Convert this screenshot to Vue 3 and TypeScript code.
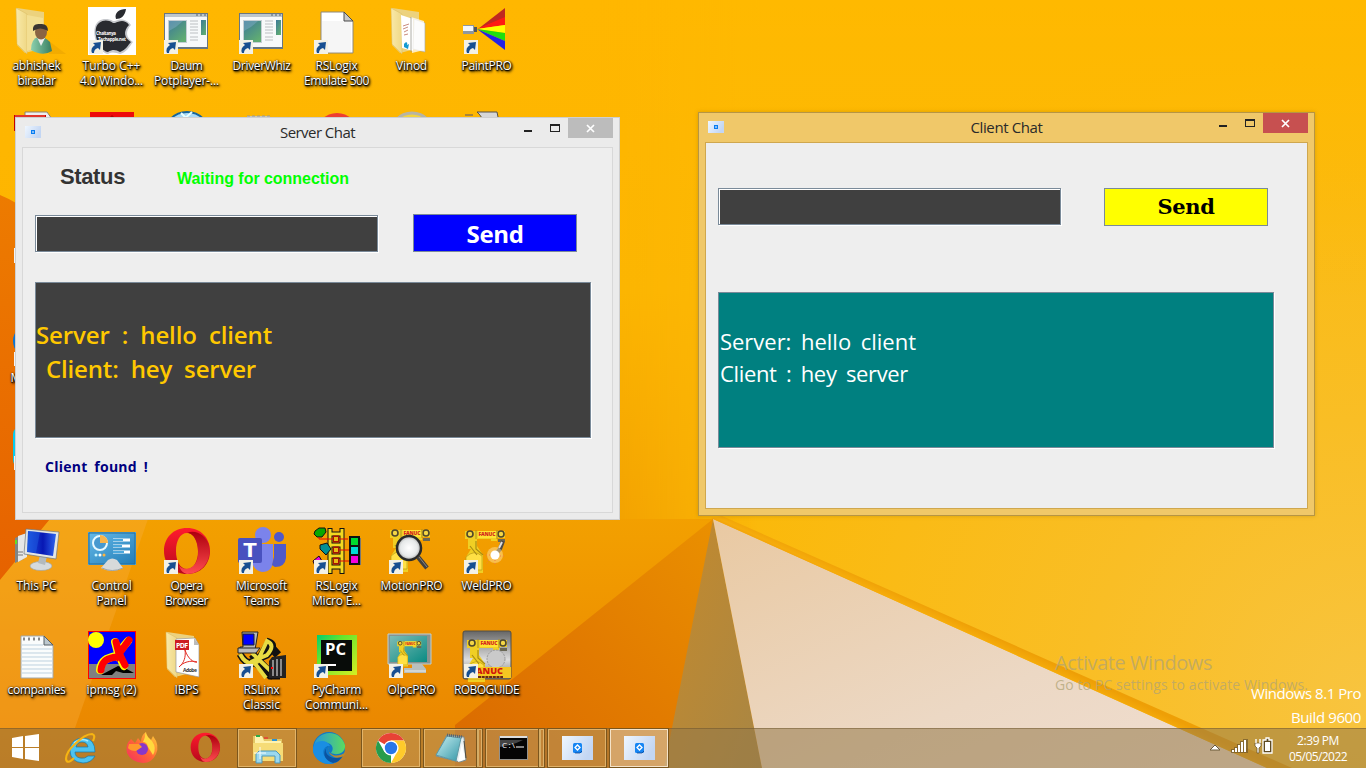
<script setup lang="ts">
import type { Directive } from 'vue'

interface DesktopItem {
  icon: string
  lines: { text: string; width: number }[]
  shortcut?: boolean
}

interface TaskItem {
  icon: string
  kind: string
}

/* Spreads the letters of a single line over a known pixel width. */
const vFit: Directive<HTMLElement, number> = {
  mounted(el, binding) {
    const count = (el.textContent ?? '').trim().length
    const natural = el.getBoundingClientRect().width
    if (count > 1) el.style.letterSpacing = `${(binding.value - natural) / count}px`
  },
}

const item = (icon: string, shortcut: boolean, ...parts: (string | number)[]): DesktopItem => {
  const lines: { text: string; width: number }[] = []
  for (let i = 0; i < parts.length; i += 2) lines.push({ text: String(parts[i]), width: Number(parts[i + 1]) })
  return { icon, shortcut, lines }
}

const blank = item('', false)

const rows: DesktopItem[][] = [
  [
    item('userFolder', false, 'abhishek', 48, 'biradar', 38),
    item('apple', true, 'Turbo C++', 58, '4.0 Windo...', 63),
    item('app', true, 'Daum', 32, 'Potplayer-...', 65),
    item('app', true, 'DriverWhiz', 58),
    item('page', true, 'RSLogix', 42, 'Emulate 500', 65),
    item('docFolder', false, 'Vinod', 31),
    item('paint', true, 'PaintPRO', 50),
  ],
  [
    item('peekPdf', false), item('peekRed', false), item('peekGlobe', false), item('peekGrid', false),
    item('peekCircle', false), item('peekDisc', false), item('peekCyl', false),
  ],
  [item('peekShort', false), blank, blank, blank, blank, blank, blank],
  [item('peekBlue', false, 'Microsoft', 52), blank, blank, blank, blank, blank, blank],
  [item('peekCyan', false), blank, blank, blank, blank, blank, blank],
  [
    item('pc', false, 'This PC', 40),
    item('control', false, 'Control', 40, 'Panel', 30),
    item('opera', true, 'Opera', 32, 'Browser', 43),
    item('teams', true, 'Microsoft', 51, 'Teams', 35),
    item('ladder', true, 'RSLogix', 42, 'Micro E...', 49),
    item('motion', true, 'MotionPRO', 62),
    item('weld', true, 'WeldPRO', 50),
  ],
  [
    item('notes', false, 'companies', 58),
    item('ipmsg', false, 'ipmsg (2)', 50),
    item('pdfFolder', false, 'IBPS', 24),
    item('linx', true, 'RSLinx', 36, 'Classic', 37),
    item('pycharm', true, 'PyCharm', 49, 'Communi...', 63),
    item('olpc', true, 'OlpcPRO', 48),
    item('robo', true, 'ROBOGUIDE', 65),
  ],
]

const folderBack = '<path d="M4 1 31 5V41L12 46 4 38Z" fill="#ecd27e"/><path d="M3 1 14 7V47L4 37Z" fill="url(#gFolder)" stroke="#d9bb62" stroke-width=".5"/>'
const robot = '<path d="M2 4H42V11H34V14H28V12H14V19L20 28V46H3V30L8 22H5V12H2Z" fill="#f0cf24"/><path d="M3 30Q11 22 19 29V43H3Z" fill="#ffe044" stroke="#b99b16" stroke-width=".7"/><path d="M7 19 14 28M13 14V22L20 28" stroke="#a88d15" stroke-width="1.2" fill="none"/><rect x="15" y="4" width="18" height="7" fill="#ffe232"/><circle cx="7" cy="7" r="3" fill="#f3d646" stroke="#4f482c" stroke-width="1.6"/><circle cx="38" cy="7" r="3" fill="#f3d646" stroke="#4f482c" stroke-width="1.6"/><path d="M13 3V12M34 3V12" stroke="#ad9220"/><text x="15.5" y="9.2" font-size="5" font-weight="900" textLength="17" fill="#d3261c">FANUC</text><path d="M35 12H42V15H35Z" fill="#696754"/>'
const operaRing = '<path fill-rule="evenodd" d="M24 1C10 1 1 11 1 24S10 47 24 47 47 37 47 24 38 1 24 1M24 6C31 6 35 14 35 24S31 42 24 42 13 34 13 24 17 6 24 6" fill="url(#gOpera)"/><path d="M24 6C33 2 43 9 46 18 49 35 38 47 24 47 20 46 18 44 16 39 25 46 34 39 35 29 36 16 31 6 24 6" fill="url(#gOpera2)"/>'

const glyphs: Record<string, string> = {
  userFolder: folderBack + '<path d="M14 8 30 11V38L14 44Z" fill="#f3df93"/><path d="M36 34 53 47H36Z" fill="#bd7900" opacity=".18"/><path d="M18 43Q18 32 25 30 31 29 37 35L39 44Q30 50 18 43Z" fill="url(#gBody)"/><path d="M24 30 28 39 32 31Z" fill="#eee"/><ellipse cx="28" cy="25" rx="6" ry="7.5" fill="#8a6443"/><path d="M20 24Q19 16 27 17 35 16 35 24L33 23Q27 20 22 23Z" fill="#3a3531"/>',
  apple: '<path d="M0 0H48V48H0Z" fill="#fff"/><path d="M25 14C18 10 9 12 7 20 4 31 12 46 20 47 25 44 28 46 32 47 38 46 42 39 45 35 38 31 37 24 43 18 38 11 31 12 27 14Z" fill="#c7c9cd"/><path d="M25 16C18 11 10 14 8 21 6 32 13 44 20 45 25 42 28 43 32 45 38 43 40 38 43 35 36 31 35 24 41 18 37 12 31 14 27 16ZM28 12C26 6 31 2 38 2 37 9 33 12 28 12" fill="#292b30"/><text x="8" y="28" font-size="4.4" font-weight="700" fill="#fff" textLength="20">Chaitanya</text><text x="10" y="34" font-size="4.4" font-weight="700" fill="#fff" textLength="28">Techapple.net</text>',
  app: '<path d="M1 6H45V42H1Z" fill="#687682"/><path d="M2 7H44V40H2Z" fill="#f7f9fa"/><path d="M2 7H44V10H2Z" fill="#bdc6cd"/><path d="M33 8H35M37 8H39M41 8H43" stroke="#55626d"/><rect x="5" y="13" width="19" height="23" fill="#c4ced3"/><path d="M6 14H23V35H6Z" fill="url(#gScreen)"/><path d="M6 14H20Q14 20 6 24Z" fill="#86b0ca" opacity=".45"/><path d="M38 13H43V28H38Z" fill="url(#gScreen)"/><path d="M27 14H35M27 17H35M27 20H35M27 23H35M27 26H35M27 30H35M27 33H35" stroke="#bcbfc2"/>',
  page: '<path d="M8 5H31L40 14V46H8Z" fill="#fff" stroke="#8e887b"/><path d="M9 14H38V45H9Z" fill="#f6f6f6"/><path d="M31 5V14H40Z" fill="#c8c8c8" stroke="#4c4c4c"/>',
  docFolder: folderBack + '<path d="M13 8 25 12V44L14 41Z" fill="#fff"/><path d="M15 19 21 17M15 22 20 20M16 25 20 23M16 28 20 27" stroke="#c98c80"/><path d="M26 12 37 16V45L25 42Z" fill="#f5f5f5" stroke="#a9abab" stroke-width=".6"/><path d="M23 10 36 14V43L24 46Z" fill="#fdfdfd" opacity=".75"/><path d="M23 10V45" stroke="#9b9b93" stroke-width=".8"/><path d="M16 37C18 34 20 35 19 38L21 37 20 42 16 40Z" fill="#169bd2"/>',
  paint: '<path d="M42 1V11L15 22Z" fill="#bf2820"/><path d="M42 10V18L14 22Z" fill="#ff1a13"/><path d="M42 18V26L14 22Z" fill="#ff0"/><path d="M42 26V34L14 22Z" fill="#20df0d"/><path d="M42 34V43L14 22Z" fill="#2422e6"/><rect x="0" y="18" width="11" height="9" fill="#8e979e"/><path d="M0 21.5H10" stroke="#f4f7f9" stroke-width="5"/><path d="M11 20H14V25H11Z" fill="#555"/>',
  peekPdf: '<path d="M12 1H34L39 8H12Z" fill="#eee" stroke="#8c8170"/><path d="M1 4H33V20H1Z" fill="#c40000"/><path d="M2 5H32" stroke="#ff6b57"/>',
  peekRed: '<path d="M2 1H46V20H2Z" fill="#ed0b0c"/><path d="M21 7 24 4 27 7Z" fill="#b80000"/>',
  peekGlobe: '<circle cx="24" cy="24" r="23" fill="#a8d9f5" stroke="#17659b" stroke-width="2"/><path d="M11 7H38M18 2 26 10M29 1 19 10" stroke="#e8ffff" stroke-width="2"/>',
  peekGrid: '<path d="M9 5H32V10H9Z" fill="#c8c8bb"/><path d="M9 5H32M9 8H32" stroke="#999" stroke-dasharray="3 2"/>',
  peekCircle: '<circle cx="24" cy="23" r="21" fill="#ed3d31"/>',
  peekDisc: '<circle cx="24" cy="24" r="22" fill="#f1d440" stroke="#b7b4a4" stroke-width="3"/>',
  peekCyl: '<path d="M14 1H34L37 16H24Q18 4 14 1Z" fill="#d7d7d7" stroke="#55514a"/><path d="M2 4H10" stroke="#a8853b" stroke-width="2"/>',
  peekShort: '<path d="M1 33H16V48H1Z" fill="#f4f4f4"/>',
  peekBlue: '<circle cx="17" cy="22" r="17" fill="#0876d8"/><path d="M1 33H16V47H1Z" fill="#f4f4f4"/>',
  peekCyan: '<rect x="0" y="4" width="35" height="40" rx="7" fill="#08ccef"/><path d="M1 33H16V47H1Z" fill="#f4f4f4"/>',
  pc: '<path d="M2 11 11 7V32L2 36Z" fill="#7f8585"/><path d="M5 9 14 6V30L5 35Z" fill="#e7e8e6"/><path d="M2 13H4V17H2Z" fill="#60e126"/><path d="M5 25H10M5 28H10" stroke="#777"/><ellipse cx="28" cy="39" rx="11" ry="4.5" fill="#d5dadc" stroke="#99a1a5" stroke-width=".6"/><path d="M27 28 34 29 32 38 25 36Z" fill="#b3babd"/><path d="M13 2 46 5 43 32 11 27Z" fill="#e5e7e3" stroke="#6d777e" stroke-width=".7"/><path d="M15 4 43 7 40 29 14 25Z" fill="url(#gMonitor)"/><path d="M16 4 27 5 23 26 14 24Z" fill="#2264e5" opacity=".45"/>',
  control: '<path d="M0 5H48V38H0Z" fill="#4aa6dc"/><path d="M1 6H47V37H1Z" fill="url(#gPanel)" stroke="#266f9c"/><circle cx="12" cy="16" r="7" fill="#4799d0" stroke="#e8f9ff" stroke-width="2"/><path d="M12 16V8A8 8 0 0 1 20 16Z" fill="#f8b44a"/><path d="M25 13H42M25 19H42M25 25H42" stroke="#fff" stroke-width="3"/><path d="M25 13H35M25 19H34M25 25H36" stroke="#4ba7dc" stroke-width="2"/><circle cx="8" cy="28" r="1.5" fill="#c8f6ff"/><circle cx="12" cy="28" r="1.5" fill="#fff"/><circle cx="16" cy="28" r="1.5" fill="#ffb43d"/><path d="M20 33Q24 30 29 33L35 41Q24 47 13 41Z" fill="#d8dada"/><path d="M14 41Q24 46 35 41" stroke="#9aa4aa" fill="none"/>',
  opera: operaRing,
  teams: '<circle cx="25" cy="8" r="8" fill="#7b83eb"/><circle cx="41" cy="10" r="5" fill="#5059c9"/><path d="M14 17H35V33Q35 45 24 45 14 43 14 32Z" fill="#7b83eb"/><path d="M36 17H48V31Q47 40 37 40Q35 39 34 38L36 30Z" fill="#5059c9"/><rect x="0" y="11" width="24" height="25" rx="2" fill="#4951bf"/><text x="5" y="30" font-size="19" font-weight="700" fill="#fff" textLength="14" lengthAdjust="spacingAndGlyphs">T</text>',
  ladder: '<path d="M17 1V47M29 1V47M17 7H29M17 18H29M17 29H29M17 40H29" stroke="#111" stroke-width="5"/><path d="M17 2V46M29 2V46M17 7H29M17 18H29M17 29H29M17 40H29" stroke="#f2d820" stroke-width="3"/><path d="M2 4 6 1H12L13 5 9 10H4L1 7Z" fill="#08a800" stroke="#111"/><path d="M7 18 14 16 18 22 13 28 7 22Z" fill="#008f94" stroke="#111"/><path d="M0 34 6 29 9 34 2 39Z" fill="#e900dd" stroke="#111"/><path d="M6 10V12H35M20 23H37M20 34H37" fill="none" stroke="#e40908"/><path d="M40 11H48V38H40" fill="#777"/><rect x="37" y="10" width="9" height="9" fill="#00da2f" stroke="#111" stroke-width="2"/><rect x="37" y="19" width="9" height="9" fill="#00dcd6" stroke="#111" stroke-width="2"/><rect x="37" y="28" width="9" height="9" fill="#f500dd" stroke="#111" stroke-width="2"/><path d="M20 12H26M20 23H26M20 34H26" stroke="#a41305" stroke-width="7"/><path d="M21 12H25M21 23H25M21 34H25" stroke="#e9b913" stroke-width="4"/>',
  motion: `<g transform="translate(0 -1)">${robot}</g><circle cx="21" cy="21" r="12" fill="url(#gLens)" stroke="#292a29" stroke-width="2.5"/><path d="M30 30 39 41" stroke="#44413d" stroke-width="4.5"/><path d="M31 30 39 40" stroke="#888" stroke-width="1"/>`,
  weld: robot + '<path d="M40 14 37 22 33 27" stroke="#4d4945" stroke-width="4" fill="none"/><path d="M39 15 36 21" stroke="#ddd" stroke-width="2"/><circle cx="32" cy="28" r="8" fill="#ffe19c" opacity=".5"/><circle cx="32" cy="28" r="4.5" fill="#fff"/><path d="M23 28H28M32 33V38M37 29H42M26 33 23 38" stroke="#ee7d4b" stroke-dasharray="1 2"/>',
  notes: '<path d="M8 5H31L40 14V47H8Z" fill="#fafcfc" stroke="#a3a8aa"/><path d="M10 8H29" stroke="#888" stroke-width="3" stroke-dasharray="2 3"/><path d="M9 14H30M9 18H39M9 22H39M9 26H39M9 30H39M9 34H39M9 38H39M9 42H39" stroke="#bdd1df"/><path d="M31 5V14H40Z" fill="#bdc8ce" stroke="#566067"/>',
  ipmsg: '<path d="M0 0H48V48H0Z" fill="#f00"/><path d="M1 1H47V34H1Z" fill="#00f"/><path d="M1 33H47V47H1Z" fill="#808080"/><circle cx="8" cy="9" r="8" fill="#ff0"/><path d="M13 44H24L28 40 35 42H46L37 37 30 35Z" fill="#000"/><path d="M12 39C13 29 19 27 28 25M27 11 30 22 40 10M30 22 36 35" stroke="#ff0" stroke-width="8" stroke-linecap="round" fill="none"/><path d="M13 39C14 29 20 27 29 26M28 11 31 23 41 9M31 22 37 34" stroke="#f00" stroke-width="7" stroke-linecap="round" fill="none"/>',
  pdfFolder: folderBack + '<path d="M13 8 32 7 36 14V46L13 41Z" fill="#fff" stroke="#999" stroke-width=".7"/><path d="M31 7V14H36Z" fill="#bbb"/><path d="M12 9H26V19H12Z" fill="#cd1b20"/><text x="13" y="16.5" font-size="7" font-weight="700" fill="#fff" textLength="12">PDF</text><path d="M22 19C25 28 31 32 34 31 28 29 20 31 16 36 21 32 23 26 22 19" stroke="#e22c24" fill="none"/><text x="20" y="41" font-size="5" font-weight="700" fill="#333" textLength="14">Adobe</text>',
  linx: '<path d="M2 23Q9 36 19 31L31 11Q39 14 29 24L15 30 32 45H42" stroke="#111" stroke-width="7" fill="none"/><path d="M14 23 36 46M27 20 33 16 40 24" stroke="#111" stroke-width="8" fill="none"/><path d="M2 23Q9 36 19 31L29 10Q38 14 29 24L15 30 28 47M14 22 38 45" stroke="#e7dc43" stroke-width="4" fill="none"/><path d="M4 1H20L17 19H2V16H5Z" fill="#b7b7b7" stroke="#222"/><path d="M5 3H16V14H5Z" fill="#00f" stroke="#222"/><path d="M0 17H22L18 22H0Z" fill="#bababa" stroke="#222"/><path d="M34 26 48 24V47H31V30Z" fill="#222"/><path d="M35 29V45M39 28V45M43 28V45" stroke="#8a8a8a" stroke-width="2"/><path d="M33 37H35" stroke="red" stroke-width="2"/>',
  pycharm: '<path d="M4 4H44V44H4Z" fill="url(#gPy)"/><path d="M8 9H39V40H8Z" fill="#080c09"/><text x="12" y="24" font-size="16" font-weight="700" fill="#fff" textLength="21" lengthAdjust="spacingAndGlyphs">PC</text><path d="M12 34H23" stroke="#fff" stroke-width="2"/>',
  olpc: `<path d="M0 3H43V33H0Z" fill="#88938f" stroke="#c0d0cf"/><path d="M2 5H39V31H2Z" fill="url(#gTeal)"/><g transform="translate(8 8) scale(.6)">${robot}</g><path d="M24 33H34L38 38V42H16V37H24Z" fill="#b9c0bd"/><path d="M17 40H38" stroke="#ebece9"/>`,
  robo: `<rect x="0" y="0" width="48" height="48" rx="2" fill="url(#gMetal)" stroke="#524e45"/><g transform="translate(2 5)">${robot}</g><circle cx="33" cy="28" r="9" fill="#cacaca" stroke="#999" stroke-dasharray="2 1"/><path d="M1 36H48V47H1Z" fill="#f5c622"/><text x="13" y="43" font-size="8" font-weight="800" fill="#d3190b" textLength="27" lengthAdjust="spacingAndGlyphs">ANUC</text><path d="M15 46H40" stroke="#6a2714" stroke-width="2" stroke-dasharray="3 .7"/>`,
  start: '<path d="M11 10 22 8V19H11ZM24 8 38 6V19H24ZM11 20H22V31L11 29ZM24 20H38V33L24 31Z" fill="#fff"/>',
  ie: '<path d="M38 24H18Q18 29 23 30 28 31 31 28H38Q34 35 26 35 13 34 13 22 14 10 27 10 38 11 38 24M19 19H31Q30 14 25 14 20 14 19 19" fill="#4cc3f1" stroke="#1678aa" stroke-width=".7"/><path d="M17 15Q24 9 31 13" stroke="#a9ebff" stroke-width="1.5" fill="none"/><path d="M17 30Q10 37 9 31 9 24 18 16 28 6 35 6 39 7 36 13" fill="none" stroke="#f6b412" stroke-width="2.2"/>',
  firefox: '<path d="M12 11 16 15 19 10 22 14Q22 7 27 4 28 9 32 12L34 8Q41 17 37 26 33 35 24 35 12 34 8 25 6 16 12 11" fill="url(#gFox)"/><circle cx="23" cy="21" r="6" fill="#8737c9"/><path d="M10 16H20L23 19 17 23Q11 23 9 20Z" fill="#ff982b"/><path d="M24 14Q27 8 26 4 28 9 33 13 38 20 34 27L29 19Q28 14 24 14" fill="#ffd93e"/>',
  operaSmall: `<g transform="translate(9 4) scale(.64)">${operaRing}</g>`,
  explorer: '<path d="M10 8H19L21 11H39V33H10Z" fill="#e3c664"/><path d="M12 8H19L21 13H38V32H12Z" fill="#fff2ad"/><path d="M10 15H40V33H10Z" fill="#f6dc77"/><path d="M13 8H17" stroke="#2eaa48" stroke-width="2"/><path d="M21 10H25" stroke="#df5134" stroke-width="2"/><path d="M29 12H34" stroke="#2d94d3" stroke-width="2"/><path d="M13 35V26L16 23H33L37 27V35H32V28H19V35Z" fill="#9bd8ef" stroke="#4d98b9"/><path d="M17 19V31M11 25H23" stroke="#fff" opacity=".9"/>',
  edge: '<circle cx="24" cy="20" r="16" fill="#0f78c9"/><path d="M9 18C11 3 34-1 40 17 41 25 32 28 26 25 32 17 21 10 9 18" fill="url(#gEdge)"/><path d="M8 21C8 12 22 10 25 18 19 17 15 25 22 31 28 36 34 31 37 29 31 39 13 39 8 24" fill="#1a8ee3"/><path d="M23 18C18 22 22 30 31 30L38 27Q35 34 28 35 17 31 20 22Z" fill="#0b53a0"/><path d="M24 19Q22 24 28 27 34 29 41 24L39 28Q33 31 29 29 22 26 24 19Z" fill="#b98a2d"/>',
  chrome: '<circle cx="24" cy="20" r="15" fill="#fff"/><path d="M24 20 11 12.5A15 15 0 0 1 37 12.5H24Z" fill="#e84335"/><path d="M24 20 24 12.5H37A15 15 0 0 1 24 35L30 24Z" fill="#ffca2b"/><path d="M24 35A15 15 0 0 1 11 12.5L17.5 24 24 27Z" fill="#279c4b"/><circle cx="24" cy="20" r="7.6" fill="#fff"/><circle cx="24" cy="20" r="6.2" fill="#2876e8"/>',
  notepad: '<path d="M20 7 37 9 39 32 33 34 9 28Z" fill="#e6eef0" stroke="#7c8a8b"/><path d="M20 8 34 10 29 33 9 27Z" fill="url(#gPad)" stroke="#5e98a2"/><path d="M20 7 36 9" stroke="#58636b" stroke-width="3" stroke-dasharray="1 1"/><path d="M35 15 38 31 31 34Z" fill="#fff"/><path d="M37 13 39 30" stroke="#554b3b"/>',
  cmd: '<path d="M10 8H39V32H10Z" fill="#92918d"/><path d="M11 10H38V31H11Z" fill="#050505"/><path d="M11 9H38" stroke="#ddd" stroke-width="2"/><path d="M11 12H34Q25 17 11 19Z" fill="#444"/><text x="13" y="20" font-size="8" fill="#fff" textLength="13">C:\\</text><path d="M27 19H35" stroke="#fff" stroke-width="1"/>',
  java: '<path d="M9 8H40V32H9Z" fill="url(#gJava)"/><rect x="20" y="15" width="9" height="10" rx="1.5" fill="#1685f3"/><path d="m24.5 17 2.5 2.5-2.5 2.5-2.5-2.5Z" fill="none" stroke="#fff" stroke-width="1.3"/><path d="M29 23 27 25H22" stroke="#083b83" fill="none" stroke-width=".7"/>',
}

const tasks: TaskItem[] = [
  { icon: 'start', kind: 'start' },
  { icon: 'ie', kind: 'pinned' },
  { icon: 'firefox', kind: 'pinned' },
  { icon: 'operaSmall', kind: 'pinned' },
  { icon: 'explorer', kind: 'open' },
  { icon: 'edge', kind: 'pinned' },
  { icon: 'chrome', kind: 'open' },
  { icon: 'notepad', kind: 'open stacked' },
  { icon: 'cmd', kind: 'open stacked' },
  { icon: 'java', kind: 'open' },
  { icon: 'java', kind: 'open active' },
]
</script>

<template>
  <main class="desktop">
    <svg class="wallpaper" viewBox="0 0 1366 768" aria-hidden="true">
      <defs>
        <linearGradient id="wBase" x1="0" y1="0" x2="0" y2="1"><stop stop-color="#ffb700" /><stop offset=".38" stop-color="#fdb500" /><stop offset=".7" stop-color="#f29e00" /><stop offset="1" stop-color="#e98300" /></linearGradient>
        <radialGradient id="wGlow" gradientUnits="userSpaceOnUse" cx="1366" cy="700" r="700"><stop stop-color="#f8c43f" /><stop offset=".4" stop-color="#f9be25" /><stop offset="1" stop-color="#fbb806" /></radialGradient>
        <linearGradient id="wFade" gradientUnits="userSpaceOnUse" x1="600" y1="0" x2="760" y2="0"><stop stop-color="#000" /><stop offset="1" stop-color="#fff" /></linearGradient>
        <mask id="wMask"><path d="M560 0H1366V768H560Z" fill="url(#wFade)" /></mask>
        <linearGradient id="wTop" gradientUnits="userSpaceOnUse" x1="0" y1="0" x2="0" y2="300"><stop stop-color="#ffb900" /><stop offset="1" stop-color="#ffb900" stop-opacity="0" /></linearGradient>
        <linearGradient id="wLeft" x1="0" y1="0" x2="0" y2="1"><stop stop-color="#ed7b00" /><stop offset="1" stop-color="#e66200" /></linearGradient>
        <linearGradient id="wShade" x1="0" y1="1" x2="1" y2="0"><stop stop-color="#da6900" /><stop offset=".5" stop-color="#e27b00" /><stop offset="1" stop-color="#ea9000" /></linearGradient>
        <linearGradient id="wSide" x1="0" y1="0" x2="1" y2="1"><stop stop-color="#c58a2c" /><stop offset="1" stop-color="#a88644" /></linearGradient>
        <linearGradient id="wCream" x1="0" y1="0" x2="1" y2="1"><stop stop-color="#e9c9a2" /><stop offset=".6" stop-color="#ecd8c4" /><stop offset="1" stop-color="#f0ded1" /></linearGradient>
        <linearGradient id="wEdge" gradientUnits="userSpaceOnUse" x1="970" y1="625" x2="964" y2="638"><stop stop-color="#ee9f06" /><stop offset=".6" stop-color="#f6ac0b" /><stop offset="1" stop-color="#ee960c" /></linearGradient>
        <linearGradient id="gFolder"><stop stop-color="#f9e9a8" /><stop offset="1" stop-color="#efd886" /></linearGradient>
        <linearGradient id="gBody"><stop stop-color="#8bd0ae" /><stop offset="1" stop-color="#397e60" /></linearGradient>
        <linearGradient id="gScreen" x2=".7" y2="1"><stop stop-color="#3c7998" /><stop offset="1" stop-color="#61ad72" /></linearGradient>
        <linearGradient id="gMonitor"><stop stop-color="#1c53df" /><stop offset=".55" stop-color="#0717b4" /><stop offset="1" stop-color="#2e64ec" /></linearGradient>
        <linearGradient id="gPanel" x2="1" y2="1"><stop stop-color="#65b9e8" /><stop offset="1" stop-color="#237db7" /></linearGradient>
        <linearGradient id="gOpera" x2="0" y2="1"><stop stop-color="#ff1b2d" /><stop offset="1" stop-color="#b7081b" /></linearGradient>
        <linearGradient id="gOpera2" x2="0" y2="1"><stop stop-color="#ad000d" /><stop offset="1" stop-color="#ff4b50" /></linearGradient>
        <radialGradient id="gLens"><stop stop-color="#fff" /><stop offset=".7" stop-color="#e6e9e9" /><stop offset="1" stop-color="#aaa" /></radialGradient>
        <linearGradient id="gPy" x2="1" y2="1"><stop stop-color="#00cf70" /><stop offset=".35" stop-color="#68e52d" /><stop offset="1" stop-color="#d6ee22" /></linearGradient>
        <linearGradient id="gTeal" x2="1" y2="1"><stop stop-color="#7ebbb5" /><stop offset="1" stop-color="#098b83" /></linearGradient>
        <linearGradient id="gMetal" x2="0" y2="1"><stop stop-color="#666" /><stop offset=".6" stop-color="#ddd" /><stop offset="1" stop-color="#777" /></linearGradient>
        <linearGradient id="gFox" x1="0" y1="1" x2="1" y2="0"><stop stop-color="#f42c63" /><stop offset=".5" stop-color="#ff6634" /><stop offset="1" stop-color="#ffdc38" /></linearGradient>
        <linearGradient id="gEdge"><stop stop-color="#2598d9" /><stop offset="1" stop-color="#5bdc5f" /></linearGradient>
        <linearGradient id="gPad" x2="1" y2="1"><stop stop-color="#c8eff2" /><stop offset="1" stop-color="#3598a8" /></linearGradient>
        <linearGradient id="gJava" x2="1" y2=".4"><stop stop-color="#eef6ff" /><stop offset="1" stop-color="#c3d6f3" /></linearGradient>
      </defs>
      <path d="M0 0H1366V768H0Z" fill="url(#wBase)" />
      <g mask="url(#wMask)">
        <path d="M560 0H1366V768H1240L713 519H560Z" fill="url(#wGlow)" />
        <path d="M560 0H1366V300H560Z" fill="url(#wTop)" />
      </g>
      <path d="M0 195Q18 202 40 220L160 390 50 519 0 580Z" fill="url(#wLeft)" />
      <path d="M50 519H148L75 728H0V580Z" fill="#f8b040" opacity=".35" />
      <path d="M713 519 455 725V768H672Z" fill="url(#wShade)" />
      <path d="M713 519 672 728 664 768H762Z" fill="url(#wSide)" />
      <path d="M713 519 1267 768H762Z" fill="url(#wCream)" />
      <path d="M711 518 722 516 1292 768H1267Z" fill="url(#wEdge)" />
    </svg>

    <section class="icons">
      <div v-for="(row, r) in rows" :key="r" class="icon-row">
        <div v-for="(entry, c) in row" :key="c" class="icon-cell">
          <div class="icon-art">
            <svg viewBox="0 0 48 48" width="48" height="48" v-html="glyphs[entry.icon] ?? ''"></svg>
            <svg v-if="entry.shortcut" class="shortcut" viewBox="0 0 14 14" width="14" height="14">
              <path d="M0 0H14V14H0Z" fill="#f3f1e6" />
              <path d="M3 13Q1 8 6 5L4 3 12 2 11 10 9 8Q5 9 5 13Z" fill="#174f91" />
            </svg>
          </div>
          <div v-for="line in entry.lines" :key="line.text" class="label"><span v-fit="line.width">{{ line.text }}</span></div>
        </div>
      </div>
    </section>

    <section class="window server">
      <header class="titlebar">
        <svg class="app-icon" viewBox="0 0 16 12" width="16" height="12"><path d="M0 0H16V12H0Z" fill="url(#gJava)" /><path d="M6 4H10V8H6Z" fill="#087df1" /><path d="M7 6H9" stroke="#fff" /></svg>
        <h1><span v-fit="75">Server Chat</span></h1>
        <svg class="controls" viewBox="0 0 94 20" width="94" height="20">
          <path d="M4 12H12V14H4Z" fill="#222" /><path d="M30 6H40V14H30ZM31 8V13H39V8Z" fill="#222" fill-rule="evenodd" />
          <path d="M48 0H93V20H48Z" fill="#bcbcbc" /><path d="m67 7 7 7m0-7-7 7" stroke="#fff" stroke-width="1.7" />
        </svg>
      </header>
      <div class="client-area">
        <div class="status-row"><span class="status"><span v-fit="65">Status</span></span><span class="waiting"><span v-fit="172">Waiting for connection</span></span></div>
        <div class="compose"><div class="field"></div><button class="send blue"><span v-fit="57">Send</span></button></div>
        <div class="log dark"><p><span v-fit="236">Server : hello client</span></p><p class="indent"><span v-fit="210">Client: hey server</span></p></div>
        <p class="found"><span v-fit="103">Client found !</span></p>
      </div>
    </section>

    <section class="window client">
      <header class="titlebar">
        <svg class="app-icon" viewBox="0 0 16 12" width="16" height="12"><path d="M0 0H16V12H0Z" fill="url(#gJava)" /><path d="M6 4H10V8H6Z" fill="#087df1" /><path d="M7 6H9" stroke="#fff" /></svg>
        <h1><span v-fit="72">Client Chat</span></h1>
        <svg class="controls" viewBox="0 0 94 20" width="94" height="20">
          <path d="M4 12H12V14H4Z" fill="#222" /><path d="M30 6H40V14H30ZM31 8V13H39V8Z" fill="#222" fill-rule="evenodd" />
          <path d="M48 0H93V20H48Z" fill="#c75050" /><path d="m67 7 7 7m0-7-7 7" stroke="#fff" stroke-width="1.7" />
        </svg>
      </header>
      <div class="client-area">
        <div class="compose"><div class="field"></div><button class="send yellow"><span v-fit="57">Send</span></button></div>
        <div class="log teal"><p><span v-fit="196">Server: hello client</span></p><p><span v-fit="188">Client : hey server</span></p></div>
      </div>
    </section>

    <aside class="activation"><strong><span v-fit="157">Activate Windows</span></strong><p><span v-fit="253">Go to PC settings to activate Windows.</span></p></aside>
    <aside class="version"><p><span v-fit="110">Windows 8.1 Pro</span></p><p><span v-fit="70">Build 9600</span></p></aside>

    <footer class="taskbar">
      <div v-for="(task, i) in tasks" :key="i" class="task" :class="task.kind">
        <svg viewBox="0 0 48 40" width="48" height="40" v-html="glyphs[task.icon]"></svg>
      </div>
      <div class="tray">
        <svg viewBox="0 0 66 24" width="66" height="24">
          <path d="M3 14 8 9 13 14Z" fill="#fff" stroke="#6a5a38" />
          <path d="M24 17V13H27V11H30V8H33V5H36V3H41V17Z" fill="#6a542b" opacity=".65" />
          <path d="M25 14H27V16H25ZM28 12H30V16H28ZM31 9H33V16H31ZM34 6H36V16H34ZM37 4H39V16H37Z" fill="#fff" />
          <path d="M48 7H54V10L52 12V17H50V12L48 10Z" fill="#fff" stroke="#5f4b22" stroke-width=".7" />
          <path d="M49 3V7M53 3V7" stroke="#fff" stroke-width="1.4" /><path d="M56 4H59V2H62V4H65V17H56Z" fill="#5f4b22" stroke="#fff" stroke-width="1.3" /><path d="M58 6H63V15H58Z" fill="#fff" />
        </svg>
        <div class="clock"><span><span v-fit="42">2:39 PM</span></span><span><span v-fit="58">05/05/2022</span></span></div>
      </div>
    </footer>
  </main>
</template>

<style>
html,
body {
  margin: 0;
  overflow: hidden;
}
</style>

<style scoped>
.desktop {
  position: relative;
  width: 1366px;
  height: 768px;
  overflow: hidden;
  font-family: "Open Sans", "Noto Sans", sans-serif;
}
.desktop * { box-sizing: border-box; }
p, h1 { margin: 0; font-weight: 400; }
.desktop span { white-space: pre; }
.wallpaper { position: absolute; inset: 0; width: 1366px; height: 768px; }
.icons { position: absolute; left: -1px; top: 7px; display: grid; grid-auto-rows: 104px; }
.icon-row { display: grid; grid-template-columns: repeat(7, 75px); }
.icon-cell { display: flex; flex-direction: column; align-items: center; }
.icon-art { position: relative; width: 48px; height: 48px; margin: 0 0 3px; }
.icon-art svg { display: block; overflow: visible; }
.icon-art .shortcut { position: absolute; left: 1px; bottom: 1px; }
.label {
  height: 15px;
  line-height: 15px;
  font-size: 12px;
  color: #fff;
  text-shadow: 0 1px 1px #000, 1px 1px 2px #000, 1px 2px 3px #000, 0 0 2px #422400;
}
.label span { display: inline-block; }

.window { position: absolute; padding: 0 6px 6px; }
.server { left: 15px; top: 117px; width: 605px; height: 403px; border: 1px solid #cfcfcf; background: #ebebeb; }
.client { left: 698px; top: 112px; width: 617px; height: 404px; border: 1px solid #b69544; background: #f0c869; box-shadow: 0 0 4px #8e690055; }
.titlebar { position: relative; height: 29px; }
.app-icon { position: absolute; left: 3px; top: 8px; }
.titlebar h1 { height: 29px; line-height: 29px; text-align: center; font-size: 15px; color: #2a2a2a; }
.titlebar h1 span { display: inline-block; }
.controls { position: absolute; right: -1px; top: 0; }
.client-area { width: 591px; height: 366px; border: 1px solid #d8d8d8; background: #eee; padding-left: 12px; }
.client .client-area { width: 603px; height: 367px; border-color: #cfa74e; padding-top: 45px; }
.status-row { display: flex; height: 66px; padding: 14px 0 0 25px; font-family: "Liberation Sans", Arial, sans-serif; font-weight: 700; }
.status { width: 117px; font-size: 22px; line-height: 30px; color: #333; }
.waiting { font-size: 16px; line-height: 34px; color: #0f0; }
.status > span, .waiting > span { display: inline-block; }
.compose { display: flex; gap: 35px; height: 38px; align-items: flex-start; }
.client .compose { gap: 43px; }
.field {
  width: 343px;
  height: 37px;
  margin-top: 1px;
  border: 1px solid #7a8a99;
  background: #404040;
  box-shadow: inset 1px 1px #fff, 1px 1px #fff;
}
.client .field { margin-top: 0; }
.send { width: 164px; height: 38px; padding: 0; border: 1px solid #7a8a99; border-radius: 0; text-align: center; }
.send span { display: inline-block; }
.blue { background: #00f; color: #fff; font: 700 24px/38px "Open Sans", sans-serif; }
.yellow { background: #ff0; color: #000; font: 700 21px/36px "DejaVu Serif", serif; }
.log {
  width: 556px;
  height: 156px;
  border: 1px solid #7a8a99;
  box-shadow: 1px 1px #fff;
  font-family: "Open Sans", sans-serif;
}
.log p { white-space: pre; }
.log span { display: inline-block; word-spacing: 4px; }
.dark { margin-top: 30px; padding-top: 35px; background: #404040; color: #ffc800; font-size: 24px; line-height: 34px; }
.dark p { font-weight: 600; }
.dark span { word-spacing: 6px; }
.dark .indent { padding-left: 10px; }
.teal { margin-top: 66px; padding: 32px 0 0 1px; background: #008080; color: #fff; font-size: 22px; line-height: 32px; }
.found { padding: 17px 0 0 10px; color: #000080; font-size: 14px; font-weight: 700; line-height: 24px; }
.found span { display: inline-block; word-spacing: 3px; }

.activation { position: absolute; left: 1055px; top: 650px; color: #b0a374bb; }
.activation strong { display: block; font-size: 20px; font-weight: 400; line-height: 25px; }
.activation p { font-size: 14px; line-height: 20px; }
.activation span, .version span { display: inline-block; }
.version { position: absolute; right: 5px; top: 681px; text-align: right; color: #fff; font-size: 15px; line-height: 24px; }

.taskbar {
  position: absolute;
  inset: 728px 0 0;
  display: flex;
  gap: 2px;
  height: 40px;
  background: rgb(147 120 73 / 55%);
  box-shadow: inset 0 1px rgb(105 80 40 / 45%);
}
.task { display: flex; flex: none; justify-content: center; align-items: center; width: 60px; height: 40px; overflow: hidden; }
.task svg { flex: none; }
.start { width: 49px; }
.open { border: 1px solid #7b561d; box-shadow: inset 0 0 0 1px rgb(244 207 139 / 60%); background: rgb(255 203 130 / 18%); }
.stacked { position: relative; padding-right: 5px; }
.stacked::after { content: ""; position: absolute; right: 3px; top: 0; width: 2px; height: 38px; border-left: 1px solid #7b561d; background: #d5ad67; }
.active { background: rgb(255 225 190 / 43%); box-shadow: inset 0 0 0 1px #f5e3c9; }
.tray { display: flex; margin-left: auto; align-items: center; color: #fff; }
.clock { display: flex; flex-direction: column; width: 84px; margin: 1px 6px 0 3px; text-align: center; font-size: 12px; line-height: 16px; }
.clock span span { display: inline-block; }
</style>
